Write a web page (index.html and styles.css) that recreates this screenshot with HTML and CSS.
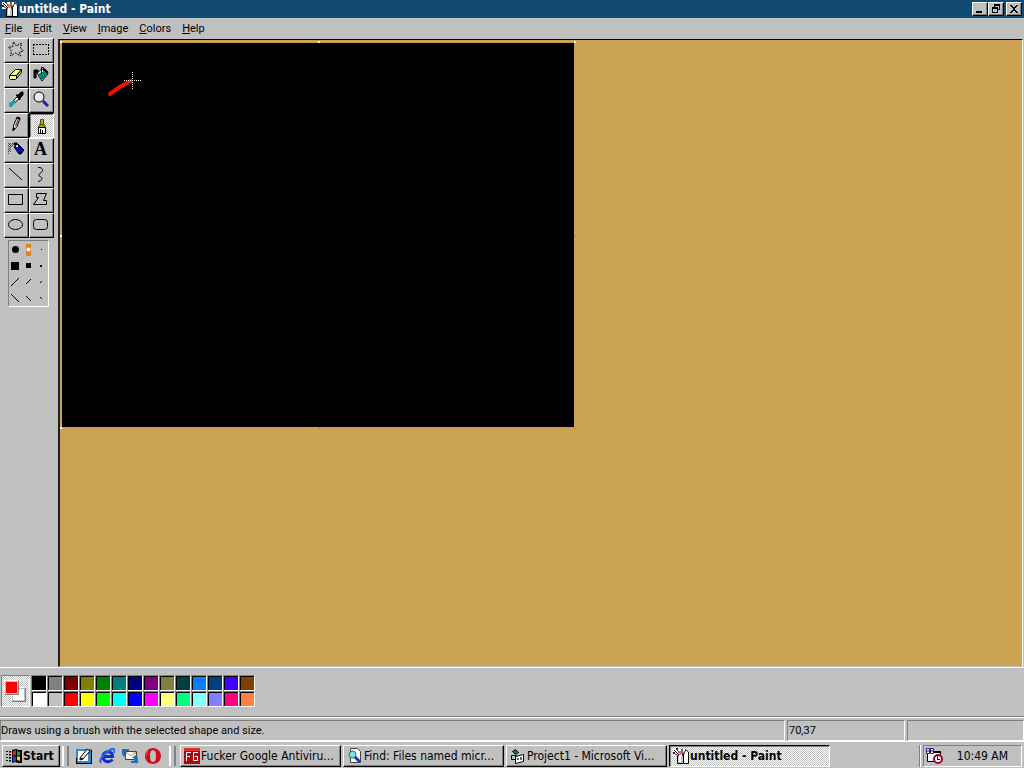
FILE: index.html
```
<!DOCTYPE html>
<html lang="en">
<head>
    <meta charset="utf-8">
    <meta name="viewport" content="width=device-width, initial-scale=1.0">
    <title>untitled - Paint</title>
    <link rel="stylesheet" href="styles.css">
</head>
<body>
    <!-- shared icon, used in the title bar and on the taskbar -->
    <svg class="defs" width="0" height="0">
        <symbol id="paint-icon" viewBox="0 0 16 16">
            <path fill="#fff" d="M0 1h13l3 3v11H4V8H0z"/>
            <path fill="#c0c0c0" d="M5 8h6v7H5z"/>
            <path fill="#fff" d="M6 8h2v6H6z"/>
            <path stroke="#000" fill="none" d="M4.500 7v8.500h6V7M11 15.500h4.500V4l-3-2.500"/>
            <path stroke="#000" d="M1 2l5 5M13 2L9 7"/>
            <path stroke="#b00028" d="M2 6l4 2M7 3v4M12 5L9 8M4 1l2 4"/>
            <path fill="#808000" d="M8 1h2v5H8z"/>
            <path fill="#202060" d="M0 4h2v2H0zM3 0h2v2H3z"/>
        </symbol>
    </svg>

    <header class="title-bar">
        <svg class="icon16"><use href="#paint-icon"/></svg>
        <h1>untitled - Paint</h1>
        <div class="window-buttons">
            <button aria-label="Minimize"><svg width="12" height="10"><path d="M2 7h6v2H2z"/></svg></button>
            <button aria-label="Restore"><svg width="12" height="10"><path d="M4 0h6v6H8V5h1V2H5v1H4zM2 3h6v6H2zM3 5v3h4V5z" fill-rule="evenodd"/></svg></button>
            <button class="close" aria-label="Close"><svg width="12" height="10"><path d="M2 1h2v1h1v1h2V2h1V1h2v1H9v1H8v1H7v2h1v1h1v1h1v1H8V8H7V7H5v1H4v1H2V8h1V7h1V6h1V4H4V3H3V2H2z"/></svg></button>
        </div>
    </header>

    <nav class="menu">
        <button><u>F</u>ile</button>
        <button><u>E</u>dit</button>
        <button><u>V</u>iew</button>
        <button><u>I</u>mage</button>
        <button><u>C</u>olors</button>
        <button><u>H</u>elp</button>
    </nav>

    <main class="work">
        <aside class="side">
            <div class="tools">
                <button aria-label="Free-form select"><svg viewBox="0 0 16 16"><path d="M5.500 1l3 4 5-3-1 5 3 3-4 1 1 4-5-3-5 3 1-5-3-4h4z" stroke-dasharray="2 1"/></svg></button>
                <button aria-label="Select"><svg viewBox="0 0 16 16"><path d="M0 3.500h16M0 13.500h16M.5 3v11M15.500 3v11" stroke-dasharray="2 1"/></svg></button>
                <button aria-label="Eraser"><svg viewBox="0 0 16 16"><path fill="#ffff90" d="M1.500 9.500l6-6h6l-5 6z"/><path fill="#ffffa8" d="M1.500 9.500h7v3l-1 1h-5l-1-1z"/><path fill="#c0c050" d="M8.500 9.500l5-6v3l-5 6z"/></svg></button>
                <button aria-label="Fill"><svg viewBox="0 0 16 16"><path fill="#fff" d="M4 7l5-4 6 5-6 7z"/><path fill="#008070" stroke="none" d="M5 8l6-3 4 3-6 6z"/><path d="M8.500 8V1.500h2V5"/><path fill="#000" d="M1 4h4v2L3 7v5H1z"/><path stroke-width="2" d="M11 3l4 4"/></svg></button>
                <button aria-label="Pick color"><svg viewBox="0 0 16 16"><path fill="#fff" d="M2 13l7-7 2 2-7 6H2z"/><path fill="#20a0a0" stroke="none" d="M1 12l5-3 2 1-4 6H1z"/><path fill="#000" d="M8 4l2 0 3-3h2v3l-3 3v2z"/></svg></button>
                <button aria-label="Magnifier"><svg viewBox="0 0 16 16"><circle cx="6" cy="6" r="5" fill="#e8e8f4"/><path stroke="#fff" d="M4 5l2-2"/><path stroke="#2020a0" stroke-width="3" d="M10 10l5 5"/></svg></button>
                <button aria-label="Pencil"><svg viewBox="0 0 16 16"><path fill="#e8d8d0" d="M5.500 9.500L9 1.500l3 1-3 8-3.500 4z"/><path stroke="#702020" d="M10.500 3l-3 7"/><path fill="#000" d="M5 12l2 1-2 2zM9 1l3 1v1L9 2z"/></svg></button>
                <button class="active" aria-label="Brush"><svg viewBox="0 0 16 16"><path fill="#b0b030" stroke="#505000" d="M6.500 1.500h3v5h-3z"/><path fill="#a0a020" stroke="#505000" d="M5.500 6.500h5l1 3h-7z"/><path fill="#fff" d="M4.500 9.500h7v6h-7z"/><path d="M6.500 11v4M8.500 12v3"/></svg></button>
                <button aria-label="Airbrush"><svg viewBox="0 0 16 16"><path fill="#0000a0" d="M6 6l4-3 6 6-3 4h-2z"/><path fill="#fff" stroke="none" d="M8 4h2v2H8z"/><path fill="#000" d="M6 2h3v2H6z"/><path stroke="#3030ff" stroke-dasharray="1 1" d="M0 2.500h6M0 4.500h5M0 6.500h4M0 8.500h3M0 10.500h3M0 12.500h2M1 3.500h4M1 5.500h3M1 7.500h2M1 9.500h2"/></svg></button>
                <button class="letter" aria-label="Text">A</button>
                <button aria-label="Line"><svg viewBox="0 0 16 16"><path d="M1 2l13 12"/></svg></button>
                <button aria-label="Curve"><svg viewBox="0 0 16 16"><path d="M5 1.500h2C11 3 10 5 7 7.500S7 10 8.500 11.500 8 15 5 15.500"/></svg></button>
                <button aria-label="Rectangle"><svg viewBox="0 0 16 16"><path d="M.5 3.500h14v10H.5z"/></svg></button>
                <button aria-label="Polygon"><svg viewBox="0 0 16 16"><path d="M3.500 2.500h10l-3 7h3v4H.5l5-7h-2z"/></svg></button>
                <button aria-label="Ellipse"><svg viewBox="0 0 16 16"><ellipse cx="7.500" cy="8.500" rx="7" ry="5"/></svg></button>
                <button aria-label="Rounded rectangle"><svg viewBox="0 0 16 16"><rect x=".5" y="3.500" width="14" height="10" rx="3"/></svg></button>
            </div>
            <svg class="brushes" width="41" height="67" role="img" aria-label="Brush shapes">
                <circle cx="6.500" cy="8.500" r="3.500"/>
                <path d="M2 21h8v8H2zM17 22h5v5h-5zM31 24h2v2h-2zM32 8h1v1h-1z"/>
                <path fill="#d98528" d="M17 3h5v12h-5z"/>
                <circle cx="19.500" cy="8.500" r="2" fill="#fff"/>
                <path stroke="#000" d="M2 45l8-8M17 43l5-5M31 42l2-2M2 53l8 8M17 55l5 5M31 56l2 2"/>
            </svg>
        </aside>
        <section class="workspace">
            <div class="sheet">
                <svg class="drawing" viewBox="0 0 512 384">
                    <path class="stroke" d="M48 51C54 46 60 42 69 38"/>
                    <path class="cross" d="M62 37.500h17M70.500 29v17"/>
                </svg>
                <i class="handle light nw"></i>
                <i class="handle light n"></i>
                <i class="handle light ne"></i>
                <i class="handle light w"></i>
                <i class="handle e"></i>
                <i class="handle light sw"></i>
                <i class="handle s"></i>
                <i class="handle se"></i>
            </div>
        </section>
    </main>

    <section class="color-box">
        <div class="current"><span class="back"></span><span class="front"></span></div>
        <div class="swatches">
            <button class="c-black" aria-label="Black"></button>
            <button class="c-gray" aria-label="Gray"></button>
            <button class="c-maroon" aria-label="Maroon"></button>
            <button class="c-olive" aria-label="Olive"></button>
            <button class="c-green" aria-label="Green"></button>
            <button class="c-teal" aria-label="Teal"></button>
            <button class="c-navy" aria-label="Navy"></button>
            <button class="c-purple" aria-label="Purple"></button>
            <button class="c-moss" aria-label="Moss"></button>
            <button class="c-pine" aria-label="Pine"></button>
            <button class="c-azure" aria-label="Azure"></button>
            <button class="c-steel" aria-label="Steel"></button>
            <button class="c-violet" aria-label="Violet"></button>
            <button class="c-brown" aria-label="Brown"></button>
            <button class="c-white" aria-label="White"></button>
            <button class="c-silver" aria-label="Silver"></button>
            <button class="c-red" aria-label="Red"></button>
            <button class="c-yellow" aria-label="Yellow"></button>
            <button class="c-lime" aria-label="Lime"></button>
            <button class="c-cyan" aria-label="Cyan"></button>
            <button class="c-blue" aria-label="Blue"></button>
            <button class="c-magenta" aria-label="Magenta"></button>
            <button class="c-cream" aria-label="Cream"></button>
            <button class="c-mint" aria-label="Mint"></button>
            <button class="c-ice" aria-label="Ice"></button>
            <button class="c-lavender" aria-label="Lavender"></button>
            <button class="c-pink" aria-label="Pink"></button>
            <button class="c-coral" aria-label="Coral"></button>
        </div>
    </section>

    <div class="status">
        <p class="hint">Draws using a brush with the selected shape and size.</p>
        <p class="pos">70,37</p>
        <p class="size"></p>
    </div>

    <footer class="taskbar">
        <button class="start">
            <svg width="17" height="16">
                <path fill="#000" d="M6 2l4-1 3 1h3v13l-4 0-3-1-3 1zM0 3h2v1H0zM3 3h2v2H3zM0 6h2v1H0zM3 6h2v2H3zM0 9h2v1H0zM3 9h2v2H3zM0 12h2v1H0zM3 12h2v2H3z"/>
                <path fill="#e02020" d="M7 3l3-1v5L7 8z"/><path fill="#20a040" d="M11 3l3 1v4l-3-1z"/>
                <path fill="#2040e0" d="M7 9l3-1v5l-3 1z"/><path fill="#f0d020" d="M11 8l3 1v4l-3-1z"/>
                <path fill="#c03030" d="M3 4h2v1H3zM3 7h2v1H3z"/><path fill="#3050d0" d="M3 10h2v1H3zM3 13h2v1H3z"/>
            </svg>
            <span>Start</span>
        </button>
        <span class="grip"></span>
        <div class="quick">
            <button aria-label="Show desktop"><svg width="16" height="16"><path fill="#3888c8" d="M0 1h16v14H0z"/><path fill="#fff" d="M2 3h10v10H2z"/><path fill="#f0ecd0" stroke="#000" d="M4 10l7-9 3 2-7 8-3 1zM4 10l3 1"/><path stroke="#000" d="M0 15.500h16M15.500 2v13M.5 10v5"/></svg></button>
            <button aria-label="Internet Explorer"><svg width="16" height="16"><path fill="none" stroke="#1030c8" stroke-width="3" d="M4 8.500h9.500C14 2 4 2 4 8.500c0 6 7 6.500 9.500 3"/><path fill="none" stroke="#2860e8" stroke-width="2" d="M2 15C-1 11 8 3 13 1c3-1 3 1 2 4"/></svg></button>
            <button aria-label="Outlook Express"><svg width="16" height="16"><path fill="#fff" stroke="#404040" d="M3.500 3.500h11v8h-11z"/><path fill="none" stroke="#d09020" d="M4 4l5 4 5-4"/><path fill="#e8c840" d="M11 4h3v2h-3z"/><path fill="#2070c0" d="M0 1h7v2H3v3h2L2 9 0 6zM16 15H9v-2h3v-3h-2l3-3 3 3z"/></svg></button>
            <button aria-label="Opera"><svg width="16" height="16"><path fill="#d01018" fill-rule="evenodd" d="M8 0c4 0 8 3 8 8s-4 8-8 8-8-3-8-8 4-8 8-8zM8 2C6 2 5 4 5 8s1 6 3 6 3-2 3-6-1-6-3-6z"/><path fill="none" stroke="#f06060" d="M3 3Q1 5 1 8"/></svg></button>
        </div>
        <span class="grip double"></span>
        <div class="tasks">
            <button class="task">
                <svg class="icon16"><path fill="#a80c10" d="M0 0h16v16H0z"/><path fill="#d83028" d="M0 0h16v3H0z"/><path fill="none" stroke="#fff" d="M2.500 13V4.500H7M2 8.500h4M14 4.500H9.500v8h4v-4H11"/></svg>
                <span>Fucker Google Antiviru...</span>
            </button>
            <button class="task">
                <svg class="icon16"><path fill="#fff" stroke="#404040" d="M3.500.5h7l3 3v11h-10z"/><circle cx="5.500" cy="6.500" r="3.500" fill="#80e0e0" stroke="#207080"/><path stroke="#1040a0" stroke-width="3" d="M8 9l5 5"/></svg>
                <span>Find: Files named micr...</span>
            </button>
            <button class="task">
                <svg class="icon16"><path fill="#207060" stroke="#000" d="M2.500 3.500l3-2 3 3-3 2z"/><path fill="#b8c8a0" stroke="#000" d="M1.500 7.500h5v4h-5z"/><path fill="#fff" stroke="#000" d="M5.500 8.500l8-2v7l-8 2z"/><path fill="#208080" d="M7 10h2v2H7zM10 9h2v3h-2z"/></svg>
                <span>Project1 - Microsoft Vi...</span>
            </button>
            <button class="task active">
                <svg class="icon16"><use href="#paint-icon"/></svg>
                <span>untitled - Paint</span>
            </button>
        </div>
        <span class="divider"></span>
        <div class="tray">
            <svg width="17" height="16"><path fill="#fff" stroke="#000" d="M1.500 3.500h13v10h-13z"/><path d="M1 3h14v2H1z"/><path fill="#fff" stroke="#202080" d="M.5.5h3v5h-3zM4.500.5h3v5h-3z"/><path stroke="#202080" d="M1 3h6"/><circle cx="12" cy="11" r="4" fill="#fff" stroke="#a00028" stroke-width="2"/><path stroke="#000" fill="none" d="M11.500 8v3.500H14"/></svg>
            <time>10:49 AM</time>
        </div>
    </footer>
</body>
</html>
```
FILE: styles.css
```
* {
    box-sizing: border-box;
}
body {
    margin: 0;
    height: 100vh;
    display: flex;
    flex-direction: column;
    overflow: hidden;
    background-color: #c0c0c0;
    color: #000;
    font: 11px/14px Roboto, "DejaVu Sans Condensed", sans-serif;
}
button {
    margin: 0;
    padding: 0;
    border: 0;
    background: none;
    color: inherit;
    font: inherit;
}
h1, p {
    margin: 0;
}
svg {
    display: block;
    flex: none;
}
.defs {
    position: absolute;
}
.icon16 {
    width: 16px;
    height: 16px;
}

/* title bar and menu */
.title-bar {
    flex: none;
    display: flex;
    align-items: center;
    height: 18px;
    padding: 0 2px;
    background-color: #114a70;
    color: #fff;
}
.title-bar h1 {
    flex: 1;
    padding-left: 1px;
    font: bold 12px/18px "DejaVu Sans Condensed", "DejaVu Sans", sans-serif;
}
.window-buttons {
    display: flex;
}
.window-buttons button {
    width: 16px;
    height: 14px;
    padding: 1px;
    background-color: #c0c0c0;
    border: 1px solid;
    border-color: #fff #000 #000 #fff;
    box-shadow: inset -1px -1px #808080;
}
.window-buttons .close {
    margin-left: 2px;
}
.menu {
    flex: none;
    display: flex;
    gap: 11px;
    height: 20px;
    padding: 1px 5px 0 5px;
}

/* toolbox */
.work {
    flex: 1;
    min-height: 0;
    display: flex;
    border-bottom: 1px solid #fff;
}
.side {
    flex: none;
    width: 58px;
    padding-left: 4px;
}
.tools {
    display: grid;
    grid-template-columns: 25px 25px;
    grid-auto-rows: 25px;
    width: 50px;
}
.tools button {
    display: flex;
    align-items: center;
    justify-content: center;
    padding: 0 2px 3px 0;
    border: 1px solid;
    border-color: #fff #000 #000 #fff;
    box-shadow: inset -1px -1px #808080;
}
.tools .active {
    padding: 0;
    border-color: #000 #fff #fff #000;
    background: repeating-conic-gradient(#fff 0 25%, #c0c0c0 0 50%) 0 0 / 2px 2px;
    box-shadow: inset 1px 1px #808080;
}
.tools svg {
    width: 16px;
    height: 16px;
    fill: none;
    stroke: #000;
}
.tools .letter {
    font: bold 18px/20px "Liberation Serif", serif;
}
.brushes {
    margin: 2px 0 0 4px;
    border: 1px solid;
    border-color: #808080 #fff #fff #808080;
}

/* drawing area */
.workspace {
    flex: 1;
    margin: 1px 1px 0 0;
    padding: 3px 2px;
    overflow: hidden;
    background-color: #cba353;
    border: 1px solid;
    border-color: #000 #fff #c0c0c0 #000;
    border-left: 2px solid #202020;
}
.sheet {
    position: relative;
    width: 512px;
    height: 384px;
    background-color: #000;
}
.drawing {
    width: 512px;
    height: 384px;
}
.stroke {
    fill: none;
    stroke: #f01008;
    stroke-width: 4;
    stroke-linecap: round;
}
.cross {
    stroke: #fff;
    stroke-dasharray: 1 1;
}
.handle {
    position: absolute;
    width: 2px;
    height: 2px;
    background-color: #d08a20;
}
.light {
    background-color: #fff;
}
.nw { left: -2px; top: -2px; }
.n { left: 256px; top: -2px; }
.ne { left: 512px; top: -2px; }
.w { left: -2px; top: 192px; }
.e { left: 512px; top: 192px; }
.sw { left: -2px; top: 384px; }
.s { left: 256px; top: 384px; }
.se { left: 512px; top: 384px; }

/* colors */
.color-box {
    flex: none;
    display: flex;
    gap: 1px;
    height: 49px;
    padding: 7px 1px;
    border-bottom: 1px solid #808080;
}
.current {
    position: relative;
    width: 29px;
    height: 32px;
    border: 1px solid;
    border-color: #808080 #fff #fff #808080;
    background: repeating-conic-gradient(#fff 0 25%, #c0c0c0 0 50%) 0 0 / 2px 2px;
}
.front, .back {
    position: absolute;
    width: 15px;
    height: 15px;
    border: 1px solid;
    border-color: #fff #808080 #808080 #fff;
    box-shadow: inset 0 0 0 1px #c0c0c0;
}
.front {
    left: 2px;
    top: 4px;
    background-color: #f00;
}
.back {
    left: 9px;
    top: 11px;
    background-color: #fff;
}
.swatches {
    display: grid;
    grid-template-columns: repeat(14, 16px);
    grid-auto-rows: 16px;
}
.swatches button {
    border: 1px solid;
    border-color: #808080 #fff #fff #808080;
    box-shadow: inset 1px 1px #000;
}
.c-black { background-color: #000; }
.c-gray { background-color: #808080; }
.c-maroon { background-color: #800000; }
.c-olive { background-color: #808000; }
.c-green { background-color: #008000; }
.c-teal { background-color: #008080; }
.c-navy { background-color: #000080; }
.c-purple { background-color: #800080; }
.c-moss { background-color: #808040; }
.c-pine { background-color: #004040; }
.c-azure { background-color: #0080ff; }
.c-steel { background-color: #004080; }
.c-violet { background-color: #4000ff; }
.c-brown { background-color: #804000; }
.c-white { background-color: #fff; }
.c-silver { background-color: #c0c0c0; }
.c-red { background-color: #f00; }
.c-yellow { background-color: #ff0; }
.c-lime { background-color: #0f0; }
.c-cyan { background-color: #0ff; }
.c-blue { background-color: #00f; }
.c-magenta { background-color: #f0f; }
.c-cream { background-color: #ffff80; }
.c-mint { background-color: #00ff80; }
.c-ice { background-color: #80ffff; }
.c-lavender { background-color: #8080ff; }
.c-pink { background-color: #ff0080; }
.c-coral { background-color: #ff8040; }

/* status bar */
.status {
    flex: none;
    display: flex;
    gap: 2px;
    height: 24px;
    padding-top: 2px;
    border-top: 1px solid #fff;
}
.status p {
    height: 21px;
    line-height: 19px;
    border: 1px solid;
    border-color: #808080 #fff #fff #808080;
}
.hint {
    flex: 1;
}
.pos {
    width: 118px;
    padding-left: 1px;
}
.size {
    width: 117px;
}

/* taskbar */
.taskbar {
    flex: none;
    display: flex;
    align-items: center;
    height: 27px;
    padding: 2px 2px 0 2px;
    border-top: 1px solid #fff;
    font: 12px/14px "DejaVu Sans Condensed", "DejaVu Sans", sans-serif;
}
.start, .task {
    display: flex;
    align-items: center;
    height: 22px;
    border: 1px solid;
    border-color: #fff #000 #000 #fff;
    box-shadow: inset -1px -1px #808080;
    white-space: nowrap;
}
.start {
    width: 58px;
    padding-left: 3px;
    font-weight: bold;
}
.grip {
    width: 7px;
    height: 20px;
    margin-left: 2px;
    border: solid;
    border-width: 0 2px;
    border-color: #fff #808080 #808080 #fff;
}
.double {
    margin-left: 8px;
}
.quick {
    display: flex;
    gap: 7px;
    margin-left: 7px;
}
.tasks {
    flex: 1;
    display: flex;
    gap: 2px;
    margin-left: 4px;
}
.task {
    width: 161px;
    padding-left: 3px;
    gap: 1px;
}
.task.active {
    border-color: #000 #fff #fff #000;
    background: repeating-conic-gradient(#fff 0 25%, #c0c0c0 0 50%) 0 0 / 2px 2px;
    box-shadow: inset 1px 1px #808080;
    font-weight: bold;
}
.divider {
    width: 2px;
    height: 22px;
    margin-right: 2px;
    border-left: 1px solid #808080;
    border-right: 1px solid #fff;
}
.tray {
    display: flex;
    align-items: center;
    justify-content: space-between;
    width: 99px;
    height: 22px;
    padding: 0 13px 0 2px;
    border: 1px solid;
    border-color: #808080 #fff #fff #808080;
}
```
